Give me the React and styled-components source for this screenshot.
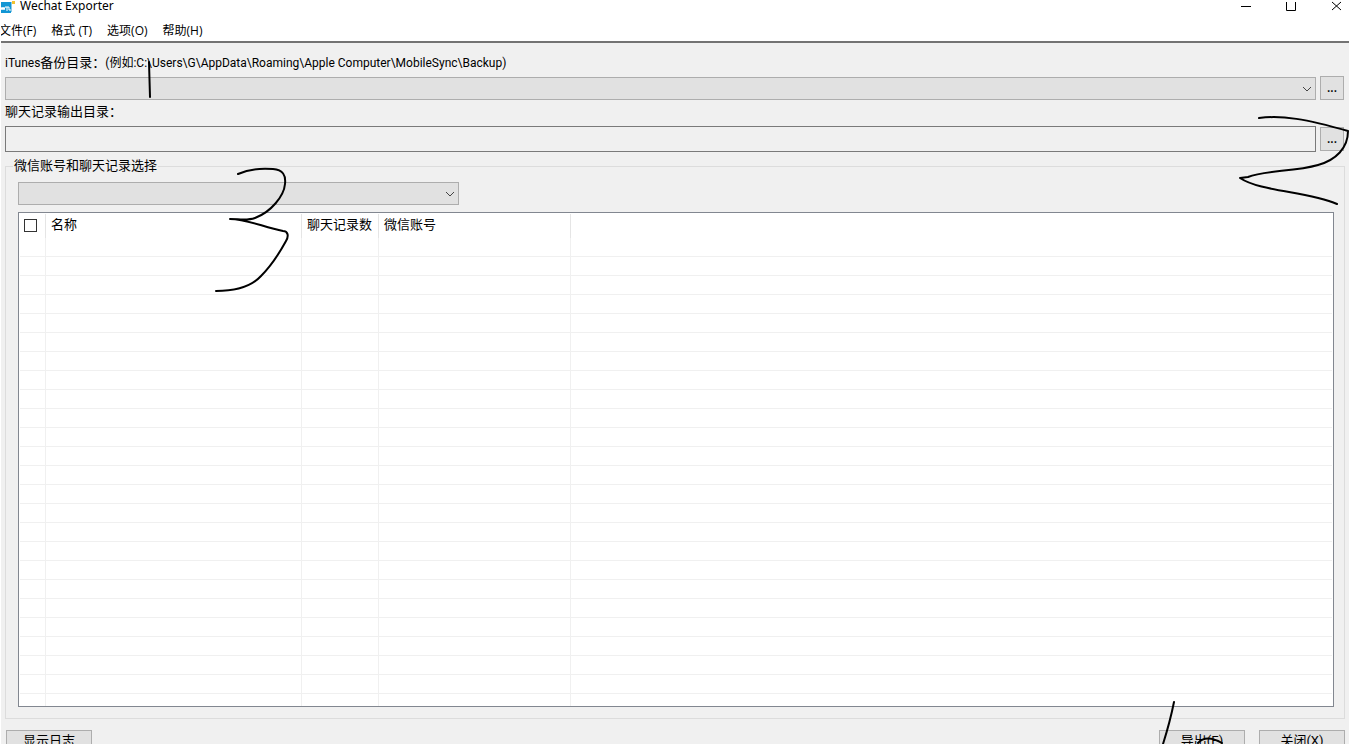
import React, { useState } from 'react'
import styled, { createGlobalStyle, css } from 'styled-components'

const GlobalStyle = createGlobalStyle`
  * {
    box-sizing: border-box;
  }

  body {
    margin: 0;
    background-color: white;
    font-family: Roboto, "Noto Sans CJK SC", sans-serif;
    font-size: 13px;
    line-height: 20px;
    color: black;
  }

  button, select, input {
    font: inherit;
    color: inherit;
  }
`

const Window = styled.div`
  position: relative;
  height: 100vh;
  display: flex;
  flex-direction: column;
  overflow: hidden;
  background-color: #f0f0f0;
  border-left: 1px solid white;
`

const TitleBar = styled.header`
  display: flex;
  align-items: center;
  height: 20px;
  padding: 0 7px 8px 0;
  background-color: white;
  flex: none;
`

const Title = styled.h1`
  flex: 1;
  margin: 0 0 0 5px;
  font-family: "Noto Sans", sans-serif;
  font-size: 12px;
  font-weight: 400;
  line-height: 12px;
`

const WindowButtons = styled.div`
  display: flex;
  gap: 33px;
`

const WindowButton = styled.button`
  width: 12px;
  height: 12px;
  padding: 0;
  border: none;
  background: none;
  display: flex;
`

const Menu = styled.nav`
  display: flex;
  gap: 15px;
  height: 23px;
  background-color: white;
  border-bottom: 2px solid #737373;
  font-family: "Open Sans", "Noto Sans CJK SC", sans-serif;
  font-size: 12px;
  flex: none;
`

const MenuItem = styled.button`
  padding: 0;
  border: none;
  background: none;
  white-space: nowrap;

  &:first-child {
    margin-left: -2px;
  }
`

const Content = styled.main`
  flex: 1;
  min-height: 0;
  display: flex;
  flex-direction: column;
  padding: 10px 4px 0;
`

const Label = styled.label`
  flex: none;
  height: 20px;
`

const Latin = styled.span`
  font-size: 12px;
`

const Row = styled.div`
  display: flex;
  align-items: ${(props) => props.$align || 'center'};
  gap: 4px;
  margin: ${(props) => props.$margin || '0'};
  padding-right: 1px;
  flex: none;
`

const field = css`
  height: 23px;
  padding: 0 4px;
  border: 1px solid #adadad;
  border-radius: 0;
  background-color: #e1e1e1;
`

const SelectBox = styled.div`
  display: grid;
  align-items: center;
  flex: ${(props) => (props.$short ? 'none' : '1')};
  width: ${(props) => (props.$short ? '441px' : 'auto')};

  > * {
    grid-area: 1 / 1;
  }

  svg {
    justify-self: end;
    margin-right: 4px;
    pointer-events: none;
  }
`

const Select = styled.select`
  ${field}
  appearance: none;
  width: 100%;
`

const PathInput = styled.input`
  ${field}
  flex: 1;
  height: 26px;
  border-color: #7a7a7a;
  background-color: #f0f0f0;
`

const Button = styled.button`
  ${field}
  width: 86px;
  height: 24px;
  padding: 0 0 2px;
`

const BrowseButton = styled(Button)`
  width: 24px;
  font-family: "Open Sans", sans-serif;
  font-size: 12px;
  font-weight: 600;
  padding: 0;
`

const Group = styled.fieldset`
  flex: 1;
  min-width: 0;
  min-height: 0;
  display: flex;
  flex-direction: column;
  margin: 4px 0 0;
  padding: 6px 10px 11px 12px;
  border: 1px solid #dcdcdc;
`

const Legend = styled.legend`
  margin-left: -5px;
  padding: 0 1px;
`

const List = styled.div`
  flex: 1;
  min-height: 0;
  margin-top: 7px;
  padding: 1px 1px 0;
  overflow: hidden;
  border: 1px solid #828790;
  background-color: white;
`

const Table = styled.table`
  width: 100%;
  table-layout: fixed;
  border-collapse: separate;
  border-spacing: 0;
`

const Th = styled.th`
  width: ${(props) => props.$width || 'auto'};
  height: 24px;
  padding: 0 0 2px ${(props) => (props.$check ? '4px' : '5px')};
  border-right: ${(props) => (props.$last ? 'none' : '1px solid #e5e5e5')};
  font-weight: 400;
  text-align: left;
  white-space: nowrap;
`

const Td = styled.td`
  height: 19px;
  padding: 0;
  border-right: ${(props) => (props.$last ? 'none' : '1px solid #f0f0f0')};
  border-bottom: 1px solid #f0f0f0;
`

const CheckBox = styled.input`
  appearance: none;
  display: block;
  width: 13px;
  height: 13px;
  margin: 0;
  border: 1px solid #333;
  background-color: white;

  &:checked {
    background-color: #0078d7;
  }
`

const Footer = styled.footer`
  display: flex;
  gap: 14px;
  height: 14px;
  margin-top: 11px;
  padding-left: 1px;
  flex: none;

  button:first-child {
    margin-right: auto;
  }
`

const Ink = styled.svg`
  position: absolute;
  top: ${(props) => props.$top}px;
  left: ${(props) => props.$left};
  right: ${(props) => props.$right};
  fill: none;
  stroke: black;
  stroke-width: 2;
  stroke-linecap: round;
  stroke-linejoin: round;
  pointer-events: none;
`

const Chevron = () => (
  <svg width="10" height="6" viewBox="0 0 10 6" fill="none" stroke="#444">
    <path d="M1 1l4 4 4-4" />
  </svg>
)

const AppIcon = () => (
  <svg width="14" height="14" viewBox="0 0 14 14">
    <path d="M0 3h10v11H0z" fill="#1296d4" />
    <path d="M10 3h1v10h-1z" fill="#8ccbe8" />
    <path d="M11 2h3v3h-3z" fill="#f2c230" />
    <path d="M0 8l1 3 1-3 1 3 1-3M4 8h4M6 8v4M8 8v3h2" fill="none" stroke="white" />
  </svg>
)

const columns = [
  { title: '', width: '26px' },
  { title: '名称', width: '256px' },
  { title: '聊天记录数', width: '77px' },
  { title: '微信账号', width: '192px' },
  { title: '' },
]

const rows = Array.from({ length: 25 }, (_, i) => i)

const App = () => {
  const [checked, setChecked] = useState(false)
  const [output, setOutput] = useState('')

  return (
    <Window>
      <GlobalStyle />
      <TitleBar>
        <AppIcon />
        <Title>Wechat Exporter</Title>
        <WindowButtons>
          <WindowButton aria-label="Minimize">
            <svg width="12" height="12" stroke="black"><path d="M1 6.500h10" /></svg>
          </WindowButton>
          <WindowButton aria-label="Maximize">
            <svg width="12" height="12" stroke="black" fill="none"><path d="M1.500 2v8.500h9V2" /></svg>
          </WindowButton>
          <WindowButton aria-label="Close">
            <svg width="12" height="12" stroke="black"><path d="M2 2l9 8M11 2L2 10" /></svg>
          </WindowButton>
        </WindowButtons>
      </TitleBar>
      <Menu>
        <MenuItem>文件(F)</MenuItem>
        <MenuItem>格式 (T)</MenuItem>
        <MenuItem>选项(O)</MenuItem>
        <MenuItem>帮助(H)</MenuItem>
      </Menu>
      <Content>
        <Label htmlFor="backup">
          <Latin>iTunes</Latin>备份目录：<Latin>(例如:C:\Users\G\AppData\Roaming\Apple Computer\MobileSync\Backup)</Latin>
        </Label>
        <Row $align="flex-end" $margin="3px 0 2px">
          <SelectBox>
            <Select id="backup" />
            <Chevron />
          </SelectBox>
          <BrowseButton>...</BrowseButton>
        </Row>
        <Label htmlFor="output">聊天记录输出目录：</Label>
        <Row $margin="4px 0 0">
          <PathInput id="output" value={output} onChange={(e) => setOutput(e.target.value)} />
          <BrowseButton>...</BrowseButton>
        </Row>
        <Group>
          <Legend>微信账号和聊天记录选择</Legend>
          <SelectBox $short>
            <Select aria-label="微信账号" />
            <Chevron />
          </SelectBox>
          <List>
            <Table>
              <thead>
                <tr>
                  {columns.map((col, i) => (
                    <Th key={i} $width={col.width} $check={i === 0} $last={i === columns.length - 1}>
                      {i === 0 ? (
                        <CheckBox
                          type="checkbox"
                          aria-label="全选"
                          checked={checked}
                          onChange={(e) => setChecked(e.target.checked)}
                        />
                      ) : col.title}
                    </Th>
                  ))}
                </tr>
              </thead>
              <tbody>
                {rows.map((row) => (
                  <tr key={row}>
                    {columns.map((col, i) => (
                      <Td key={i} $last={i === columns.length - 1} />
                    ))}
                  </tr>
                ))}
              </tbody>
            </Table>
          </List>
        </Group>
        <Footer>
          <Button>显示日志</Button>
          <Button>导出(E)</Button>
          <Button>关闭(X)</Button>
        </Footer>
      </Content>
      <Ink $top={60} $left="139px" width="20" height="40">
        <path d="M9 2l1 35" />
      </Ink>
      <Ink $top={160} $left="210px" width="90" height="140">
        <path d="M27 14C38 9 50 8 62 9C72 10 75 15 74 24C73 36 60 52 44 58C36 61 28 59 19 59C36 59 52 67 72 71C77 71 78 76 75 81C69 92 60 106 50 116C40 127 22 131 5 131" />
      </Ink>
      <Ink $top={110} $right="0" width="119" height="100">
        <path d="M29 8C52 5 76 9 118 21C118 38 106 50 88 55C64 62 35 60 18 67L10 68C31 82 78 81 107 94" />
      </Ink>
      <Ink $top={696} $right="109px" width="80" height="48">
        <path d="M14 6Q10 26 3 48M38 47Q46 38 62 47" />
      </Ink>
    </Window>
  )
}

export default App
